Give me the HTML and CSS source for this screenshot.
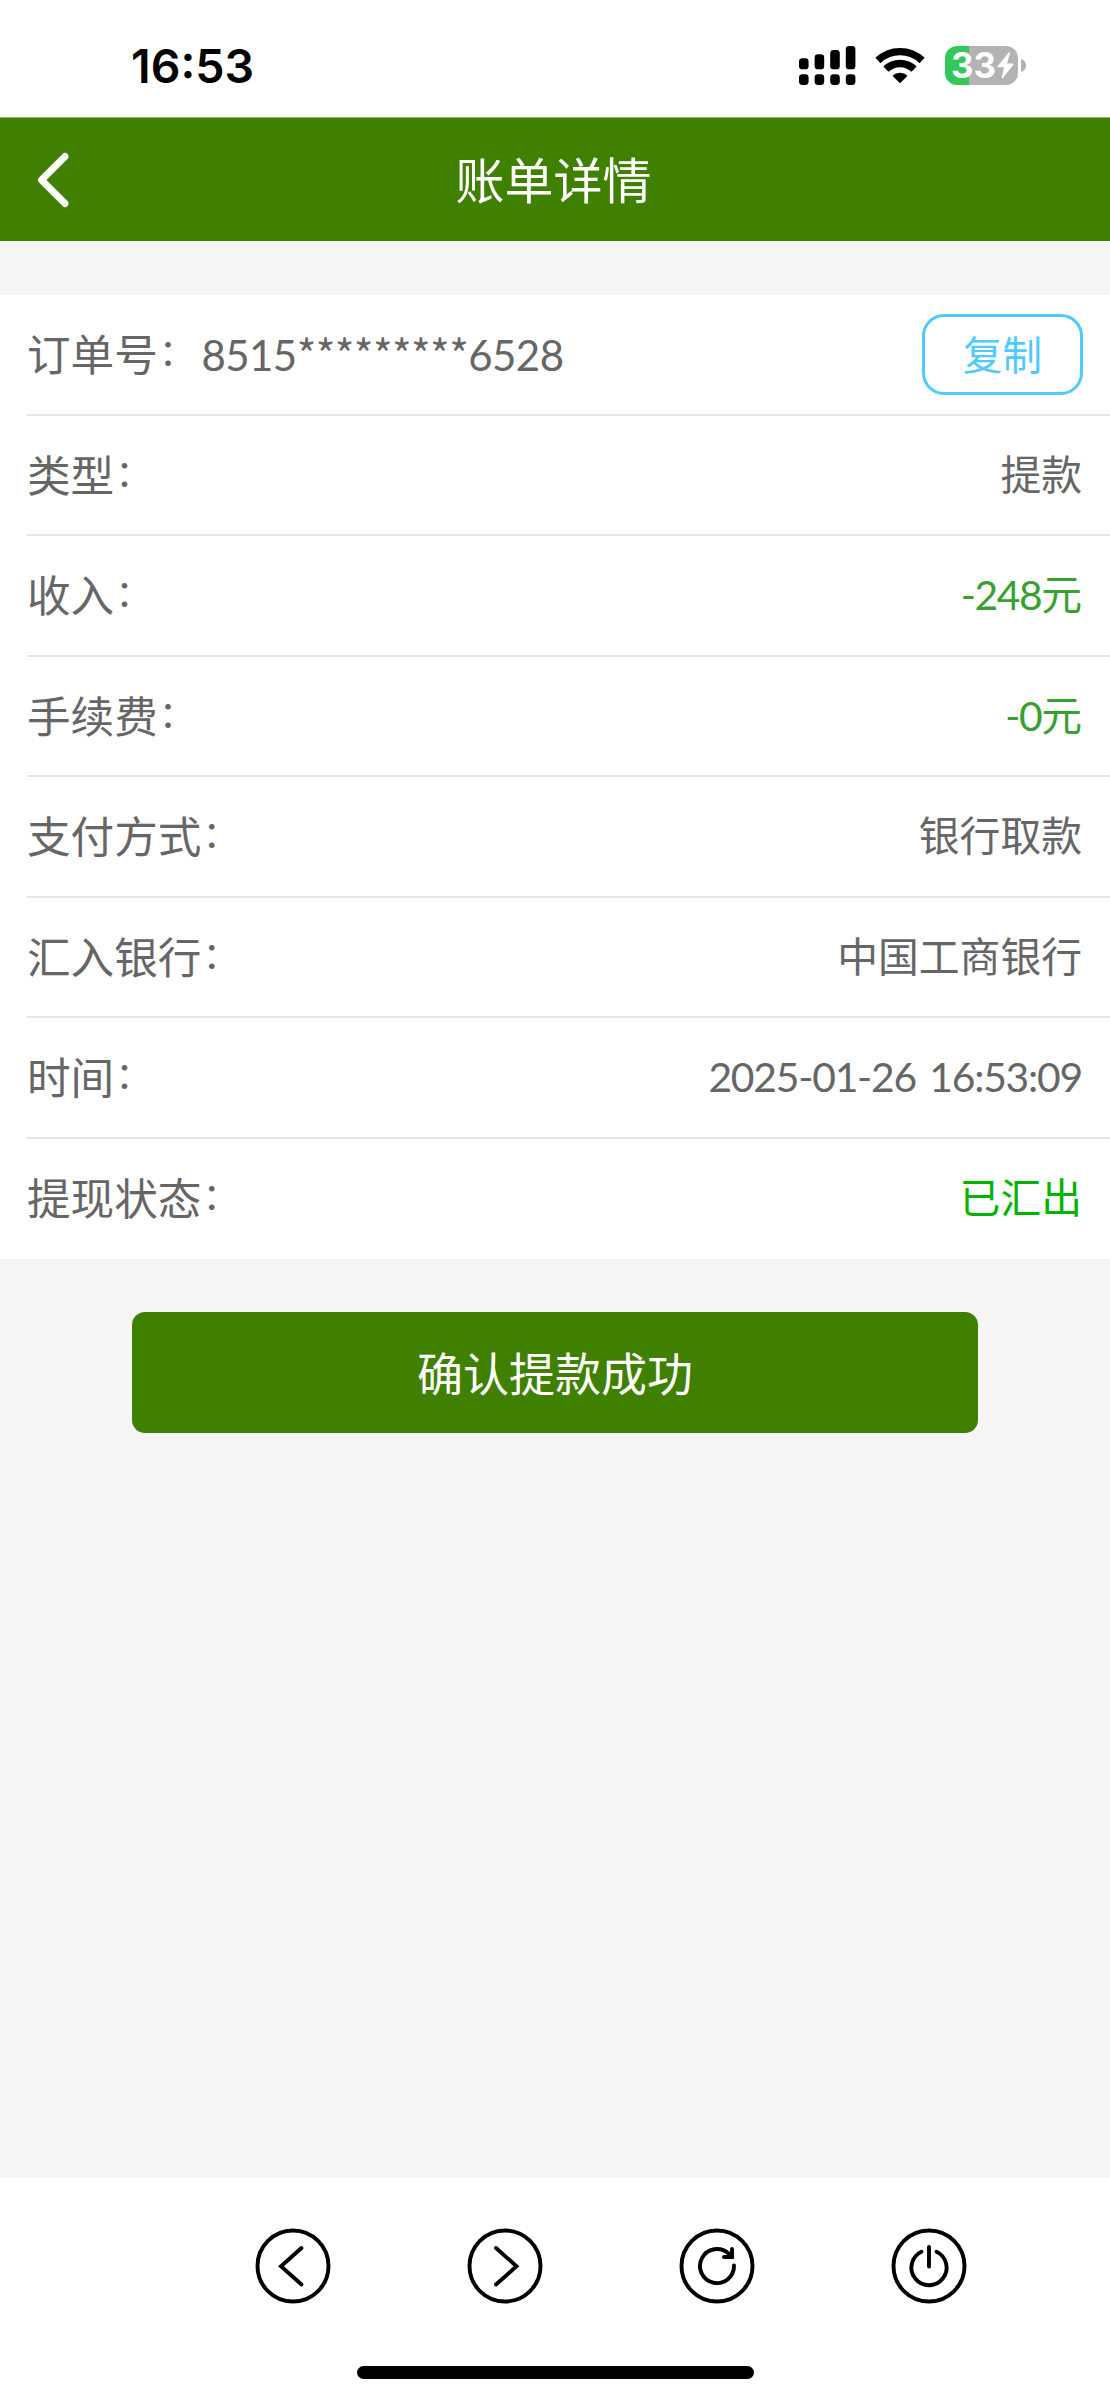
FILE: index.html
```html
<!DOCTYPE html>
<html lang="zh-CN">
<head>
<meta charset="utf-8">
<title>账单详情</title>
<link rel="stylesheet" href="styles.css">
</head>
<body>
<div class="screen">
  <div class="status">
    <span class="clock">16:53</span>
    <div class="indicators">
      <svg width="57" height="39" viewBox="0 0 57 39">
        <rect x="0" y="12.3" width="9.6" height="11" rx="3.4"/><rect x="15.6" y="8.3" width="9.6" height="15" rx="3.4"/><rect x="31.2" y="4" width="9.6" height="19.3" rx="3.4"/><rect x="46.8" y="0" width="9.6" height="23.3" rx="3.4"/>
        <rect x="0" y="28.3" width="9.6" height="10.7" rx="3.4"/><rect x="15.6" y="28.3" width="9.6" height="10.7" rx="3.4"/><rect x="31.2" y="28.3" width="9.6" height="10.7" rx="3.4"/><rect x="46.8" y="28.3" width="9.6" height="10.7" rx="3.4"/>
      </svg>
      <svg class="wifi" width="50" height="38" viewBox="0 0 50 38">
        <g fill="none" stroke="#000" stroke-width="7.4"><path d="M2.9 14.5a32 32 0 0 1 44.2 0"/><path d="M10.9 23.2a20.2 20.2 0 0 1 28.2 0"/></g>
        <path d="M25 37.2 17.4 29.7a11 11 0 0 1 15.2 0z"/>
      </svg>
      <div class="battery">
        <span class="level">33</span>
        <svg class="bolt" width="17" height="27" viewBox="0 0 17 27"><path fill="#fff" d="M11.7.4 .6 14.2q-.6 1 .5 1h6L4.700 25.400q0 1.500 1.200.7L16.600 12.500q.6-1-.6-1h-6L13 1.200Q13-.3 11.700.4z"/></svg>
        <svg class="nub" width="5" height="13" viewBox="0 0 5 13"><path fill="#b3b3b3" d="M0 0q5 1.800 5 6.500T0 13z"/></svg>
      </div>
    </div>
  </div>
  <header class="nav">
    <svg class="back" width="32" height="56" viewBox="0 0 32 56"><path d="M28 4.500 4.500 28 28 51.500" fill="none" stroke="#fff" stroke-width="6.900" stroke-linecap="round" stroke-linejoin="round"/></svg>
    <h1 class="title">账单详情</h1>
  </header>
  <main class="content">
    <div class="list">
      <div class="row"><span class="label">订单号<i class="colon">：</i><span class="order">8515<span class="mask">*********</span>6528</span></span><button class="copy">复制</button></div>
      <div class="row"><span class="label">类型<i class="colon">：</i></span><span class="value">提款</span></div>
      <div class="row"><span class="label">收入<i class="colon">：</i></span><span class="value amount"><span class="num">-248</span>元</span></div>
      <div class="row"><span class="label">手续费<i class="colon">：</i></span><span class="value amount"><span class="num">-0</span>元</span></div>
      <div class="row"><span class="label">支付方式<i class="colon">：</i></span><span class="value">银行取款</span></div>
      <div class="row"><span class="label">汇入银行<i class="colon">：</i></span><span class="value">中国工商银行</span></div>
      <div class="row"><span class="label">时间<i class="colon">：</i></span><span class="value num date">2025-01-26 16:53:09</span></div>
      <div class="row"><span class="label">提现状态<i class="colon">：</i></span><span class="value done">已汇出</span></div>
    </div>
    <button class="confirm">确认提款成功</button>
  </main>
  <footer class="toolbar">
    <div class="tools">
      <svg class="tool" viewBox="0 0 76 76"><circle cx="38" cy="38" r="35.500"/><path d="M46.500 20 26 38.300 46.500 56.500"/></svg>
      <svg class="tool" viewBox="0 0 76 76"><circle cx="38" cy="38" r="35.500"/><path d="M29 20 49.500 38.300 29 56.500"/></svg>
      <svg class="tool" viewBox="0 0 76 76"><circle cx="38" cy="38" r="35.500"/><path d="M55 37.500A17 17 0 1 1 49.500 25.500M53 21v8H45"/></svg>
      <svg class="tool" viewBox="0 0 76 76"><circle cx="38" cy="38" r="35.500"/><path d="M38 19V38.500M30.500 23.700a17.600 17.600 0 1 0 15 0"/></svg>
    </div>
    <div class="home"></div>
  </footer>
</div>
</body>
</html>
```
FILE: styles.css
```css
* { box-sizing: border-box; }
body { margin: 0; background: #fff; }
.screen {
  width: 1110px; height: 2400px; display: flex; flex-direction: column;
  font-family: Lato, "Noto Sans CJK SC", sans-serif; color: #666; background: #fff;
}
.status {
  height: 117px; padding: 0 84px 0 131px; display: flex; justify-content: space-between;
}
.clock { margin-top: 38px; font: 600 46.500px/56px Inter, sans-serif; color: #000; }
.indicators { display: flex; align-items: flex-start; padding-top: 46px; }
.indicators svg { display: block; }
.wifi { margin-left: 19px; }
.battery {
  position: relative; width: 73px; height: 39px; margin: 0 8px 0 20px; border-radius: 12px;
  background: linear-gradient(90deg, #34c759 24.300px, #b3b3b3 24.300px);
  display: flex; align-items: center; padding-left: 6px;
}
.level { width: 46px; font: 700 35px/39px Inter, sans-serif; color: #fff; }
.nub { position: absolute; left: 76px; top: 13px; }
.nav {
  height: 124px; background: #408000; border-top: 1px solid #8cb366;
  display: grid; grid-template-columns: 110px 1fr 113px; align-items: center;
}
.back { margin-left: 37px; }
.title { margin: 0; text-align: center; color: #fff; font-weight: 400; font-size: 49px; line-height: 60px; }
.content { flex: 1; background: #f5f5f5; padding-top: 54px; }
.list { background: #fff; padding-left: 27px; }
.row {
  height: 120.500px; padding-right: 28px; border-bottom: 2px solid #e6e6e6;
  display: flex; align-items: center; justify-content: space-between;
}
.row:last-child { border-bottom-color: transparent; }
.label { font-size: 43.600px; line-height: 60px; white-space: nowrap; }
.colon { font-style: normal; font-size: 37px; line-height: 0; vertical-align: 5px; margin: 0 5.600px 0 1px; }
.order { font-size: 42px; letter-spacing: -0.550px; }
.mask { font-family: "Noto Sans CJK SC", sans-serif; line-height: 0; }
.value { font-size: 40.800px; line-height: 60px; }
.num { letter-spacing: -1.450px; word-spacing: 4px; }
.date { letter-spacing: -1.200px; }
.amount { color: #37a02f; }
.done { color: #00b400; }
.copy {
  width: 161px; height: 81px; margin: 1px -1px 0 0; padding: 0 0 4px; border: 3px solid #4dcbff; border-radius: 22px;
  background: #fff; color: #4dcbff; font: 39.500px/60px "Noto Sans CJK SC", sans-serif;
}
.confirm {
  display: block; width: 846px; height: 121px; margin: 53px auto 0; padding: 0 0 4px; border: 0;
  border-radius: 13px; background: #408000; color: #fff; font: 46px/60px "Noto Sans CJK SC", sans-serif;
}
.toolbar { height: 222px; display: flex; flex-direction: column; align-items: center; }
.tools { display: flex; gap: 136.200px; margin: 50px 0 0 112px; }
.tool {
  width: 76px; height: 76px; fill: none; stroke: #000; stroke-width: 3.900; stroke-linecap: round;
}
.home { width: 397px; height: 13px; margin-top: 62px; border-radius: 7px; background: #000; }
```
